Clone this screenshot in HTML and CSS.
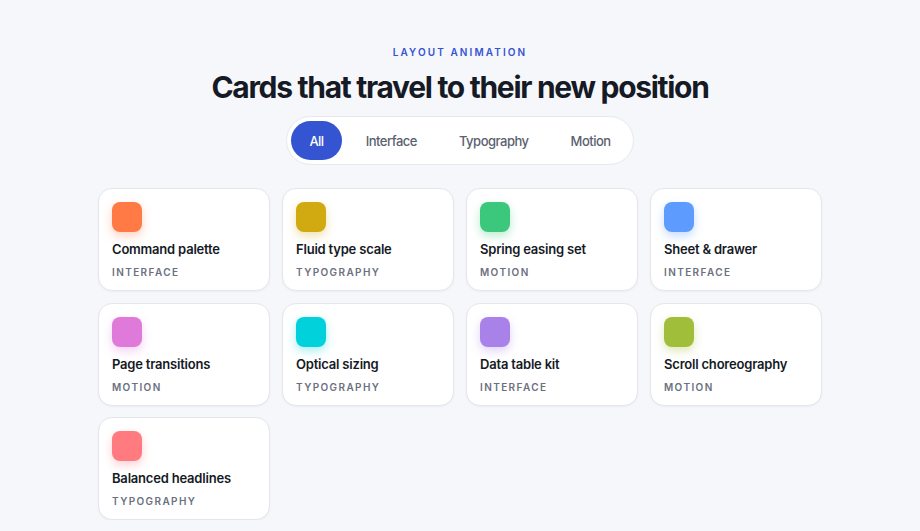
FILE: index.html
```html
<!DOCTYPE html>
<html lang="en">
<head>
<meta charset="utf-8">
<title>Layout animation</title>
<link rel="stylesheet" href="styles.css">
</head>
<body>
<main class="page">
  <header class="intro">
    <p class="eyebrow">Layout animation</p>
    <h1 class="title">Cards that travel to their new position</h1>
  </header>
  <nav class="filters">
    <button class="filter is-active">All</button>
    <button class="filter">Interface</button>
    <button class="filter">Typography</button>
    <button class="filter">Motion</button>
  </nav>
  <section class="grid">
    <article class="card"><span class="swatch orange"></span><h2 class="card-title">Command palette</h2><p class="card-tag">Interface</p></article>
    <article class="card"><span class="swatch mustard"></span><h2 class="card-title">Fluid type scale</h2><p class="card-tag">Typography</p></article>
    <article class="card"><span class="swatch green"></span><h2 class="card-title">Spring easing set</h2><p class="card-tag">Motion</p></article>
    <article class="card"><span class="swatch blue"></span><h2 class="card-title">Sheet &amp; drawer</h2><p class="card-tag">Interface</p></article>
    <article class="card"><span class="swatch pink"></span><h2 class="card-title">Page transitions</h2><p class="card-tag">Motion</p></article>
    <article class="card"><span class="swatch cyan"></span><h2 class="card-title">Optical sizing</h2><p class="card-tag">Typography</p></article>
    <article class="card"><span class="swatch purple"></span><h2 class="card-title">Data table kit</h2><p class="card-tag">Interface</p></article>
    <article class="card"><span class="swatch olive"></span><h2 class="card-title">Scroll choreography</h2><p class="card-tag">Motion</p></article>
    <article class="card"><span class="swatch coral"></span><h2 class="card-title">Balanced headlines</h2><p class="card-tag">Typography</p></article>
  </section>
</main>
</body>
</html>
```
FILE: styles.css
```css
* { box-sizing: border-box; }
html, body { margin: 0; padding: 0; }
body {
  background: #f6f7fb;
  font-family: Inter, "Noto Sans", "Liberation Sans", sans-serif;
  color: #151a24;
}
.page {
  padding-top: 44px;
  display: flex;
  flex-direction: column;
  align-items: center;
}
.intro { text-align: center; }
.eyebrow {
  margin: 0;
  font-size: 10px;
  line-height: 16px;
  font-weight: 600;
  letter-spacing: 2.1px;
  text-transform: uppercase;
  color: #3454d1;
}
.title {
  margin: 9px 0 0;
  font-size: 30px;
  line-height: 36px;
  font-weight: 700;
  letter-spacing: -1.3px;
  color: #151a24;
}
.filters {
  margin-top: 11px;
  display: flex;
  gap: 6px;
  padding: 4px;
  background: #fff;
  border: 1px solid #e6e8ee;
  border-radius: 999px;
}
.filter {
  border: 0;
  background: transparent;
  font-family: inherit;
  font-size: 13px;
  font-weight: 500;
  letter-spacing: -0.5px;
  color: #5b6170;
  height: 39px;
  padding: 0 18px;
  border-radius: 999px;
}
.filter.is-active {
  background: #3454d1;
  color: #fff;
}
.grid {
  margin-top: 23px;
  width: 724px;
  display: grid;
  grid-template-columns: repeat(4, 1fr);
  gap: 11.5px 12px;
}
.card {
  background: #fff;
  border: 1px solid #e4e6ec;
  border-radius: 14px;
  padding: 13px 13px 11px;
  box-shadow: 0 1px 2px rgba(20, 24, 40, 0.04);
}
.swatch {
  display: block;
  width: 30px;
  height: 30px;
  border-radius: 8px;
}
.card-title {
  margin: 7px 0 0;
  font-size: 13px;
  line-height: 20px;
  font-weight: 600;
  letter-spacing: -0.2px;
  color: #151a24;
}
.card-tag {
  margin: 6px 0 0;
  font-size: 10px;
  line-height: 14px;
  font-weight: 600;
  letter-spacing: 0.14em;
  text-transform: uppercase;
  color: #6b7080;
}
.orange { background: #ff7a45; box-shadow: 0 4px 10px rgba(255, 122, 69, 0.35); }
.mustard { background: #d1aa12; box-shadow: 0 4px 10px rgba(209, 170, 18, 0.35); }
.green { background: #3cc87c; box-shadow: 0 4px 10px rgba(60, 200, 124, 0.35); }
.blue { background: #5e9bff; box-shadow: 0 4px 10px rgba(94, 155, 255, 0.35); }
.pink { background: #e07ada; box-shadow: 0 4px 10px rgba(224, 122, 218, 0.35); }
.cyan { background: #00d1db; box-shadow: 0 4px 10px rgba(0, 209, 219, 0.35); }
.purple { background: #a882e8; box-shadow: 0 4px 10px rgba(168, 130, 232, 0.35); }
.olive { background: #a0be3a; box-shadow: 0 4px 10px rgba(160, 190, 58, 0.35); }
.coral { background: #ff7b80; box-shadow: 0 4px 10px rgba(255, 123, 128, 0.35); }
```
